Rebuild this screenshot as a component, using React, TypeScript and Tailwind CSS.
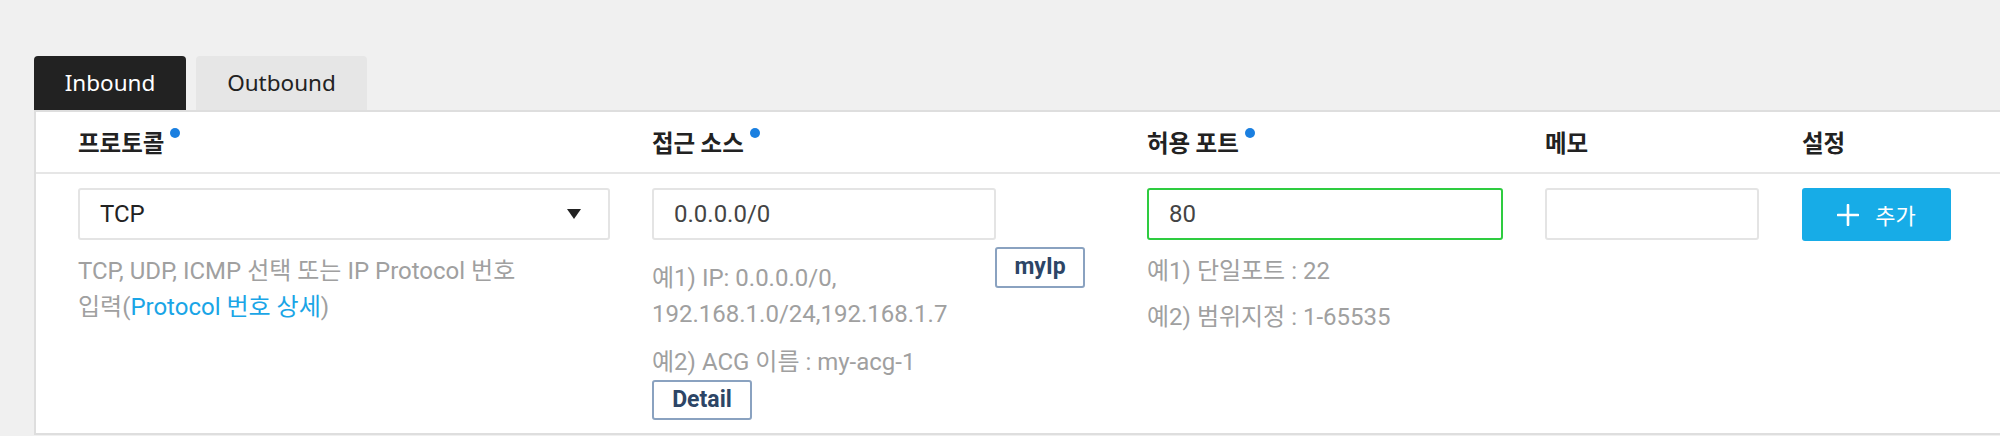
import React from "react";

// Security group rule editor (Inbound / Outbound)

const sans = "font-['Roboto','Noto_Sans_CJK_KR',sans-serif]";
const kr = "font-['Noto_Sans_CJK_KR','Noto_Sans',sans-serif]";

const RequiredDot = () => (
  <span className="ml-[6px] mt-[2px] size-[10px] shrink-0 rounded-full bg-[#1a7fe0]" />
);

const HeaderCell = ({ label, required }: { label: string; required?: boolean }) => (
  <div className="flex items-center">
    <div className="flex items-start">
      <span className={`${kr} text-[23.5px] font-bold leading-[32px] text-[#222]`}>{label}</span>
      {required && <RequiredDot />}
    </div>
  </div>
);

const TextBox = ({ value, width, focused }: { value?: string; width: string; focused?: boolean }) => (
  <input
    readOnly
    defaultValue={value}
    className={`${sans} ${width} h-[52px] rounded-[3px] border-2 bg-white px-[20px] text-[24px] text-[#444] outline-none ${
      focused ? "border-[#2ecc40]" : "border-[#e4e4e4]"
    }`}
  />
);

const OutlineButton = ({ label, className }: { label: string; className?: string }) => (
  <button
    className={`${sans} flex items-center justify-center rounded-[3px] border-2 border-[#8aa2c0] bg-white text-[23px] font-bold text-[#2c4566] ${className ?? ""}`}
  >
    {label}
  </button>
);

export default function App() {
  return (
    <div className="h-[436px] overflow-hidden bg-[#f0f0f0] pl-[34px] pt-[56px]">
      {/* tabs */}
      <div className="flex gap-[10px]">
        <div className="flex h-[54px] w-[152px] items-center justify-center rounded-t-[4px] bg-[#222] font-['Noto_Sans',sans-serif] text-[22.5px] text-white">
          Inbound
        </div>
        <div className="flex h-[54px] w-[171px] items-center justify-center rounded-t-[4px] bg-[#e6e6e6] font-['Noto_Sans',sans-serif] text-[22.5px] text-[#222]">
          Outbound
        </div>
      </div>

      {/* card */}
      <div className="border-2 border-r-0 border-[#dedede] bg-white">
        {/* header row */}
        <div className="grid h-[62px] grid-cols-[574px_495px_398px_257px_1fr] border-b-2 border-[#e6e6e6] pl-[42px]">
          <HeaderCell label="프로토콜" required />
          <HeaderCell label="접근 소스" required />
          <HeaderCell label="허용 포트" required />
          <HeaderCell label="메모" />
          <HeaderCell label="설정" />
        </div>

        {/* body row */}
        <div className={`${sans} grid grid-cols-[574px_495px_398px_257px_1fr] items-start pb-[13px] pl-[42px] pt-[14px]`}>
          {/* protocol */}
          <div>
            <div className="flex h-[52px] w-[532px] items-center justify-between rounded-[3px] border-2 border-[#e4e4e4] pl-[20px] pr-[27px]">
              <span className="text-[24px] text-[#222]">TCP</span>
              <svg width="14" height="10" viewBox="0 0 14 10">
                <polygon points="0,0 14,0 7,10" fill="#222" />
              </svg>
            </div>
            <p className="mt-[13px] text-[24px] leading-[36px] text-[#a0a0a0]">
              TCP, UDP, ICMP 선택 또는 IP Protocol 번호
              <br />
              입력(<span className="text-[#1aa5e6]">Protocol 번호 상세</span>)
            </p>
          </div>

          {/* source */}
          <div className="w-[433px]">
            <TextBox value="0.0.0.0/0" width="w-[344px]" />
            <div className="mt-[7px]">
              <OutlineButton label="myIp" className="float-right h-[41px] w-[90px]" />
              <p className="pt-[13px] text-[24px] leading-[36px] text-[#a0a0a0]">
                예1) IP: 0.0.0.0/0,
                <br />
                192.168.1.0/24,192.168.1.7
              </p>
              <p className="mt-[12px] text-[24px] leading-[36px] text-[#a0a0a0]">예2) ACG 이름 : my-acg-1</p>
              <OutlineButton label="Detail" className="h-[40px] w-[100px]" />
            </div>
          </div>

          {/* port */}
          <div>
            <TextBox value="80" width="w-[356px]" focused />
            <div className="mt-[13px] flex flex-col gap-[10px] text-[24px] leading-[36px] text-[#a0a0a0]">
              <p>예1) 단일포트 : 22</p>
              <p>예2) 범위지정 : 1-65535</p>
            </div>
          </div>

          {/* memo */}
          <div>
            <TextBox width="w-[214px]" />
          </div>

          {/* action */}
          <div>
            <button className="flex h-[53px] w-[149px] items-center justify-center gap-[16px] rounded-[3px] bg-[#17ace7] text-white">
              <svg width="22" height="22" viewBox="0 0 22 22">
                <path d="M11 1v20M1 11h20" stroke="#fff" strokeWidth="2.6" strokeLinecap="round" />
              </svg>
              <span className={`${kr} text-[22px]`}>추가</span>
            </button>
          </div>
        </div>
      </div>
    </div>
  );
}
